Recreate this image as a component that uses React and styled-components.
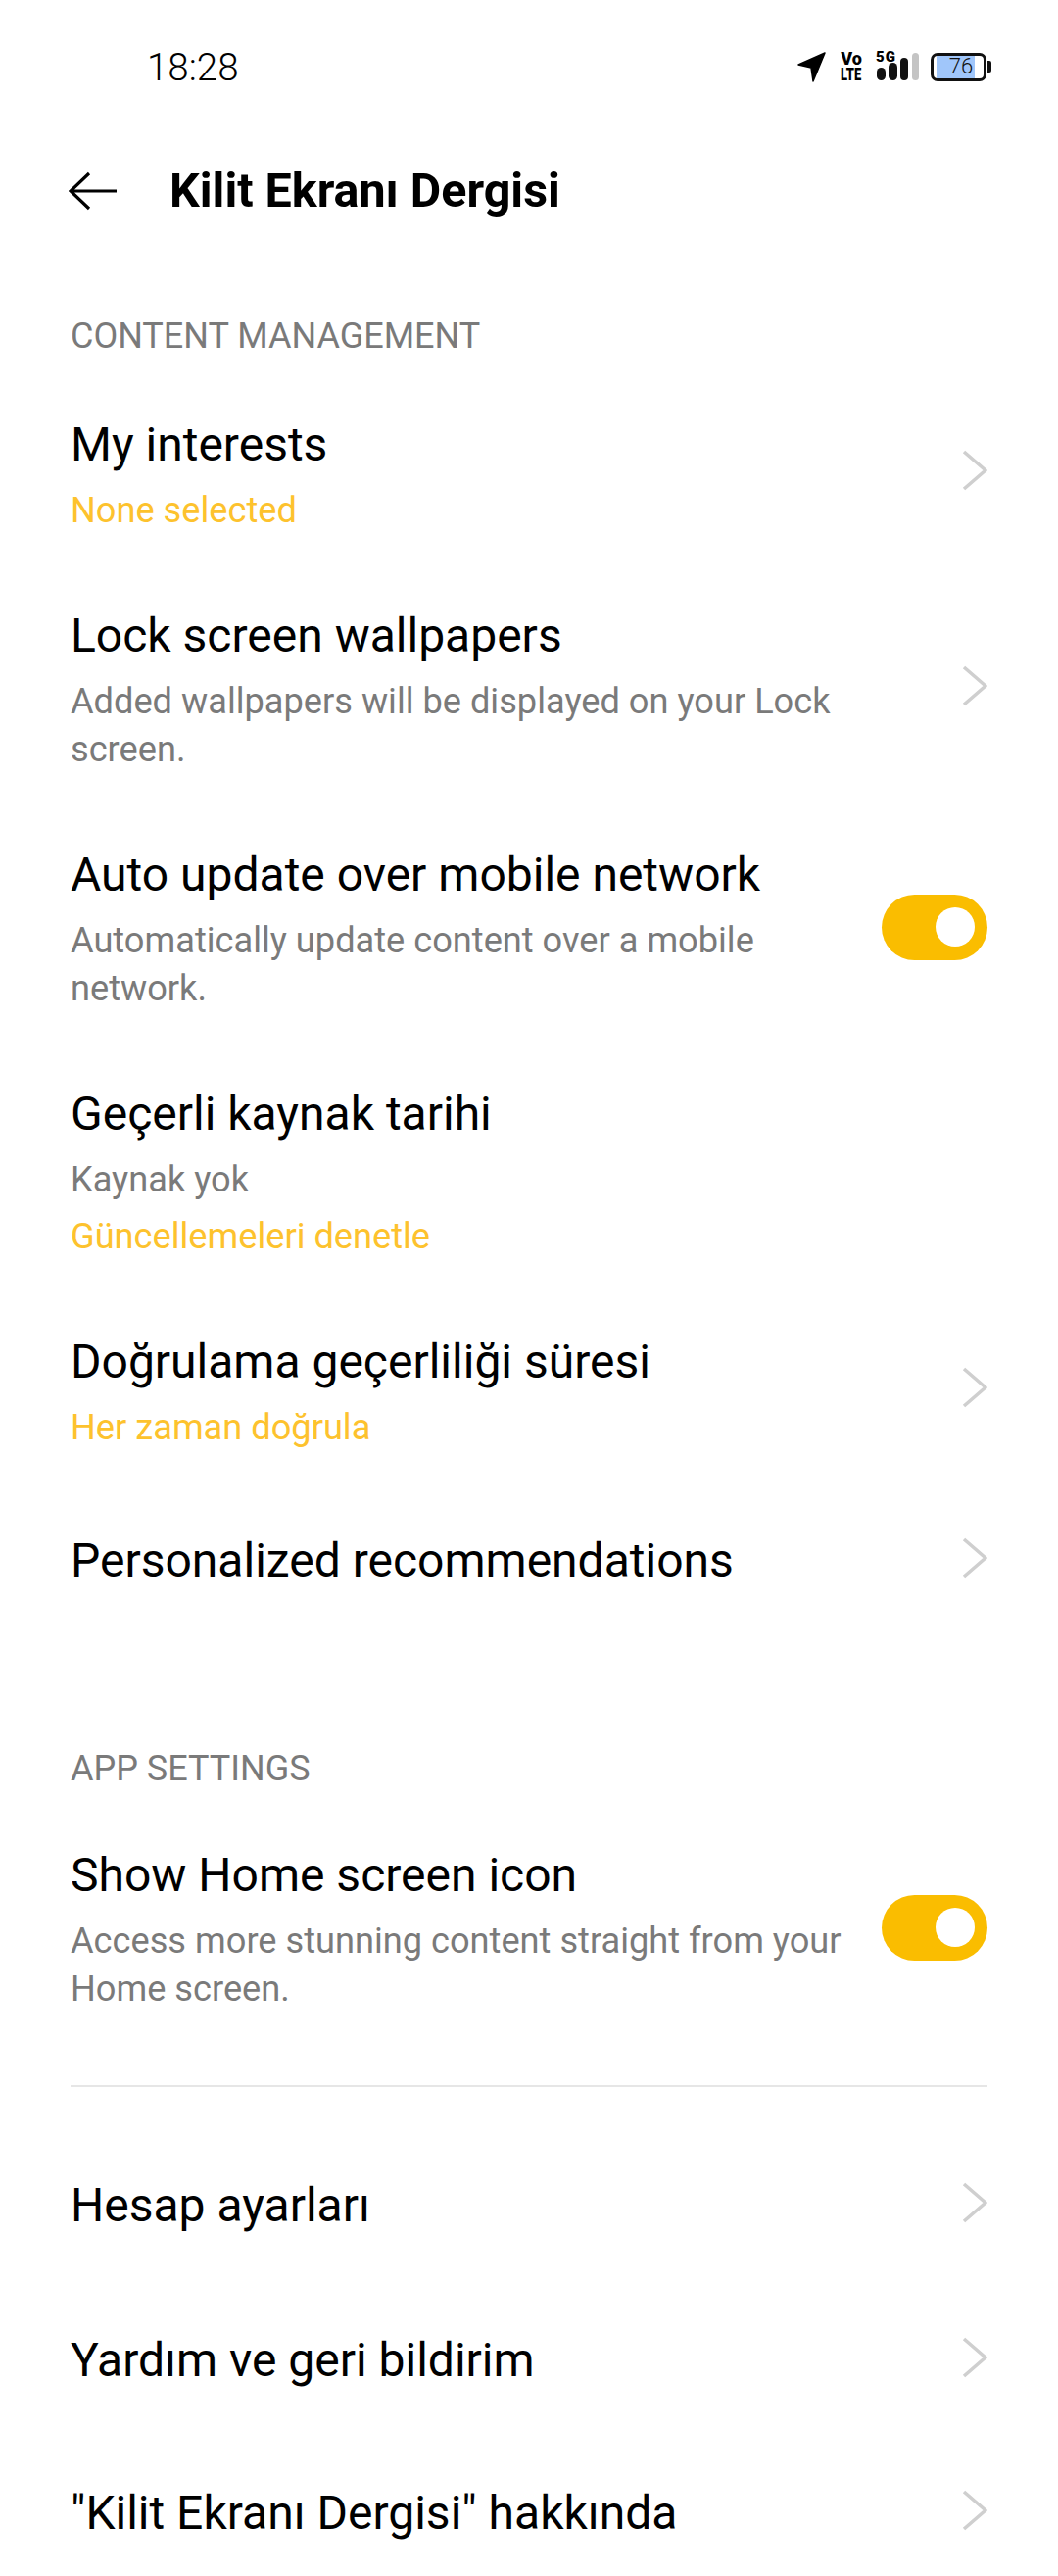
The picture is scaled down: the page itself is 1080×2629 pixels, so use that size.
import React from "react";
import styled, { createGlobalStyle } from "styled-components";

const Global = createGlobalStyle`
  html, body { margin: 0; padding: 0; background: #fff; }
  body { font-family: Roboto, "Noto Sans", sans-serif; -webkit-font-smoothing: antialiased; }
`;
const Page = styled.div`
  width: 1080px; height: 2629px; overflow: hidden; background: #fff; color: #000;
  box-sizing: border-box;
`;
const StatusBar = styled.div`
  height: 136px; box-sizing: border-box; padding: 0 68px 0 150px;
  display: flex; justify-content: space-between; align-items: center;
`;
const Clock = styled.span`
  font-size: 38.5px; font-weight: 300; letter-spacing: 0; line-height: 1; margin-top: 2px;
`;
const StatusIcons = styled.div`display: flex; align-items: center;`;
const Network = styled.div`
  width: 22px; margin: 0 14px 0 15px; display: flex; flex-direction: column; align-items: center;
  font-size: 18px; font-weight: 900; line-height: 16px; color: #000;
`;
const NetworkLine = styled.span`
  white-space: nowrap; transform: scaleX(${(p) => p.$squeeze || 1});
`;
const Signal = styled.div`position: relative; width: 44px; height: 30px; margin-right: 12px;`;
const FiveG = styled.span`
  position: absolute; left: 0; top: -2px; font-size: 15px; line-height: 14px; font-weight: 900; letter-spacing: 1px; color: #000;
`;
const Battery = styled.div`
  position: relative; width: 57px; height: 29px; box-sizing: border-box; border: 3px solid #111;
  border-radius: 7px; display: flex; align-items: center; justify-content: center; overflow: hidden;
  font-size: 22px; font-weight: 300; color: #111;
`;
const BatteryFill = styled.div`
  position: absolute; left: 3px; top: 0; bottom: 0; background: #a0c6fa;
`;
const BatteryLabel = styled.span`position: relative; line-height: 1; margin-left: 5px;`;
const BatteryCap = styled.div`width: 4px; height: 12px; background: #111; border-radius: 0 2px 2px 0; margin-left: 1px;`;
const Header = styled.div`
  height: 118px; box-sizing: border-box; padding-left: 70px; display: flex; align-items: center; gap: 53px;
`;
const Title = styled.h1`
  margin: 0; font-size: 48.4px; font-weight: 700; line-height: 66px; color: #000;
`;
const Content = styled.div`padding: 66px 72px 0;`;
const SectionLabel = styled.div`
  font-size: 36px; line-height: 46px; color: #7a7a7a;
  margin-top: ${(p) => p.$top || 0}px; margin-bottom: ${(p) => p.$bottom ?? 20}px;
`;
const Row = styled.div`
  display: flex; align-items: center; justify-content: space-between; box-sizing: border-box;
  padding: 35px 0 36px; min-height: ${(p) => p.$min || 157}px;
`;
const RowText = styled.div`flex: 1; min-width: 0; max-width: 810px;`;
const RowTitle = styled.div`font-size: 48px; line-height: 66px; color: #000;`;
const RowSub = styled.div`
  font-size: 36.2px; line-height: 49px; color: #7a7a7a; margin-top: 9px;
`;
const RowLink = styled.div`
  font-size: 36.2px; line-height: 49px; color: #fdc22d; margin-top: ${(p) => p.$top ?? 9}px;
`;
const Toggle = styled.div`
  width: 108px; height: 67px; border-radius: 34px; background: #fabd00; flex-shrink: 0; margin-bottom: 1px;
  display: flex; align-items: center; justify-content: flex-end; padding-right: 13px; box-sizing: border-box;
`;
const Knob = styled.div`width: 40px; height: 40px; border-radius: 50%; background: #fff;`;
const Divider = styled.div`height: 2px; background: #e6e6e6; margin: 38px 0 41px;`;
const ChevronIcon = styled.svg`flex-shrink: 0; margin-bottom: 6px;`;

const Chevron = () => (
  <ChevronIcon width="26" height="42" viewBox="0 0 26 42" fill="none">
    <path d="M2 2 L24 21 L2 40" stroke="#cfcfcf" strokeWidth="3.6" strokeLinejoin="round" />
  </ChevronIcon>
);
const Back = () => (
  <svg width="50" height="40" viewBox="0 0 50 40" fill="none">
    <path d="M49 20 H2 M21 2 L2 20 L21 38" stroke="#000" strokeWidth="3.2" />
  </svg>
);
const Arrow = () => (
  <svg width="29" height="31" viewBox="0 0 29 31">
    <path d="M28 1 L1 13 L14 16 L16 30 Z" fill="#000" stroke="#000" strokeWidth="1.5" strokeLinejoin="round" />
  </svg>
);
const Bars = () => (
  <svg width="44" height="30" viewBox="0 0 44 30">
    <rect x="1" y="16" width="9" height="13" rx="4.5" fill="#111" />
    <rect x="13" y="11" width="9" height="18" rx="4.5" fill="#111" />
    <rect x="25" y="6" width="8" height="23" rx="4" fill="#111" />
    <rect x="37" y="1" width="7" height="28" rx="3.5" fill="#c4c4c4" />
  </svg>
);

const Item = ({ title, sub, link, linkTop, chevron, toggle, min }) => (
  <Row $min={min}>
    <RowText>
      <RowTitle>{title}</RowTitle>
      {sub && <RowSub>{sub}</RowSub>}
      {link && <RowLink $top={linkTop}>{link}</RowLink>}
    </RowText>
    {chevron && <Chevron />}
    {toggle && <Toggle><Knob /></Toggle>}
  </Row>
);

export default function App() {
  return (
    <Page>
      <Global />
      <StatusBar>
        <Clock>18:28</Clock>
        <StatusIcons>
          <Arrow />
          <Network>
            <NetworkLine>Vo</NetworkLine>
            <NetworkLine $squeeze={0.72}>LTE</NetworkLine>
          </Network>
          <Signal><Bars /><FiveG>5G</FiveG></Signal>
          <Battery>
            <BatteryFill style={{ width: "76%" }} />
            <BatteryLabel>76</BatteryLabel>
          </Battery>
          <BatteryCap />
        </StatusIcons>
      </StatusBar>
      <Header>
        <Back />
        <Title>Kilit Ekranı Dergisi</Title>
      </Header>
      <Content>
        <SectionLabel>CONTENT MANAGEMENT</SectionLabel>
        <Item title="My interests" link="None selected" chevron />
        <Item title="Lock screen wallpapers" sub="Added wallpapers will be displayed on your Lock screen." chevron />
        <Item title="Auto update over mobile network" sub="Automatically update content over a mobile network." toggle />
        <Item title="Geçerli kaynak tarihi" sub="Kaynak yok" link="Güncellemeleri denetle" />
        <Item title="Doğrulama geçerliliği süresi" link="Her zaman doğrula" chevron />
        <Item title="Personalized recommendations" chevron min={152} />
        <SectionLabel $top={113} $bottom={18}>APP SETTINGS</SectionLabel>
        <Item title="Show Home screen icon" sub="Access more stunning content straight from your Home screen." toggle />
        <Divider />
        <Item title="Hesap ayarları" chevron min={160} />
        <Item title="Yardım ve geri bildirim" chevron />
        <Item title={'"Kilit Ekranı Dergisi" hakkında'} chevron min={155} />
      </Content>
    </Page>
  );
}
